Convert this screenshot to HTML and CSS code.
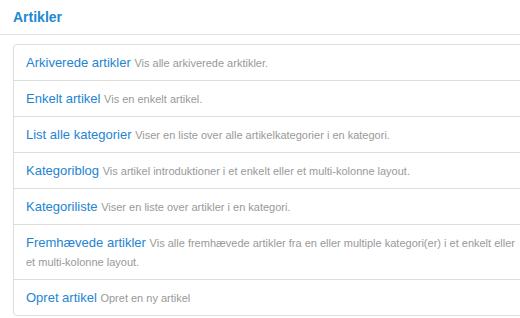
FILE: index.html
```html
<!DOCTYPE html>
<html lang="da">
<head>
  <meta charset="UTF-8" />
  <title>Artikler</title>
  <link rel="stylesheet" href="styles.css">
</head>
<body>
  <div class="panel">
    <h3 class="panel-title">Artikler</h3>
    <ul class="menu-types">
      <li><a href="#">Arkiverede artikler</a> <small>Vis alle arkiverede arktikler.</small></li>
      <li><a href="#">Enkelt artikel</a> <small>Vis en enkelt artikel.</small></li>
      <li><a href="#">List alle kategorier</a> <small>Viser en liste over alle artikelkategorier i en kategori.</small></li>
      <li><a href="#">Kategoriblog</a> <small>Vis artikel introduktioner i et enkelt eller et multi-kolonne layout.</small></li>
      <li><a href="#">Kategoriliste</a> <small>Viser en liste over artikler i en kategori.</small></li>
      <li><a href="#">Fremhævede artikler</a> <small>Vis alle fremhævede artikler fra en eller multiple kategori(er) i et enkelt eller et multi-kolonne layout.</small></li>
      <li><a href="#">Opret artikel</a> <small>Opret en ny artikel</small></li>
    </ul>
  </div>
</body>
</html>
```

FILE: styles.css
```css
* {
  margin: 0;
  padding: 0;
  box-sizing: border-box;
}
body {
  font-family: 'Liberation Sans', Arial, sans-serif;
  background: #fff;
  color: #333;
  overflow: hidden;
}
.panel {
  width: 531px;
}
.panel-title {
  font-size: 14px;
  font-weight: bold;
  color: #1f8ad2;
  line-height: 20px;
  padding: 7px 13px 7px;
  border-bottom: 1px solid #e3e3e3;
}
.menu-types {
  list-style: none;
  margin: 9px 0 0 13px;
  border: 1px solid #ddd;
  border-radius: 4px;
}
.menu-types li {
  padding: 8px 12px;
  font-size: 13px;
  line-height: 19px;
  border-top: 1px solid #ddd;
}
.menu-types li:first-child {
  border-top: none;
}
.menu-types a {
  font-size: 13px;
  color: #2384d3;
  text-decoration: none;
}
.menu-types small {
  font-size: 11px;
  line-height: 1;
  color: #999;
}
```
